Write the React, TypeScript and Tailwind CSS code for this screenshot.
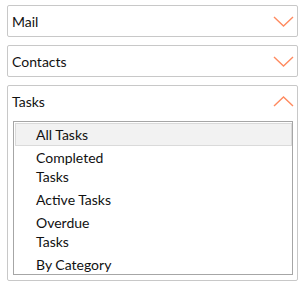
import React from "react";

const Chevron = ({ up }: { up?: boolean }) => (
  <svg width="21" height="11" viewBox="0 0 21 11" className="shrink-0">
    <path
      d={up ? "M1 10 L10.5 1 L20 10" : "M1 1 L10.5 10 L20 1"}
      fill="none"
      stroke="#ff8a5f"
      strokeWidth="1.4"
    />
  </svg>
);

const Header = ({ title, open }: { title: string; open?: boolean }) => (
  <div className="flex h-[30px] items-center justify-between pl-[4px] pr-[3px]">
    <span>{title}</span>
    <Chevron up={open} />
  </div>
);

const items = ["All Tasks", "Completed Tasks", "Active Tasks", "Overdue Tasks", "By Category"];

export default function App() {
  return (
    <div
      className="flex w-[306px] flex-col gap-[8px] bg-white pl-[7px] pt-[5px] text-[14px] text-[#111]"
      style={{ fontFamily: "Lato, 'Noto Sans', sans-serif" }}
    >
      <div className="w-[291px] rounded-[2px] border border-[#c8c8c8]">
        <Header title="Mail" />
      </div>
      <div className="w-[291px] rounded-[2px] border border-[#c8c8c8]">
        <Header title="Contacts" />
      </div>
      <div className="w-[291px] rounded-[2px] border border-[#c8c8c8] pb-[5px]">
        <Header title="Tasks" open />
        <div className="ml-[5px] mr-[4px] mt-[5px] h-[154px] overflow-hidden border border-[#a6a6a6] p-px pr-0">
          {items.map((t, i) => (
            <div
              key={t}
              className={
                "border py-[1px] pl-[20px] leading-[19px] " +
                (i === 0 ? "border-[#dadada] bg-[#f2f2f2]" : "border-transparent")
              }
            >
              <div className="w-[84px]">{t}</div>
            </div>
          ))}
        </div>
      </div>
    </div>
  );
}
